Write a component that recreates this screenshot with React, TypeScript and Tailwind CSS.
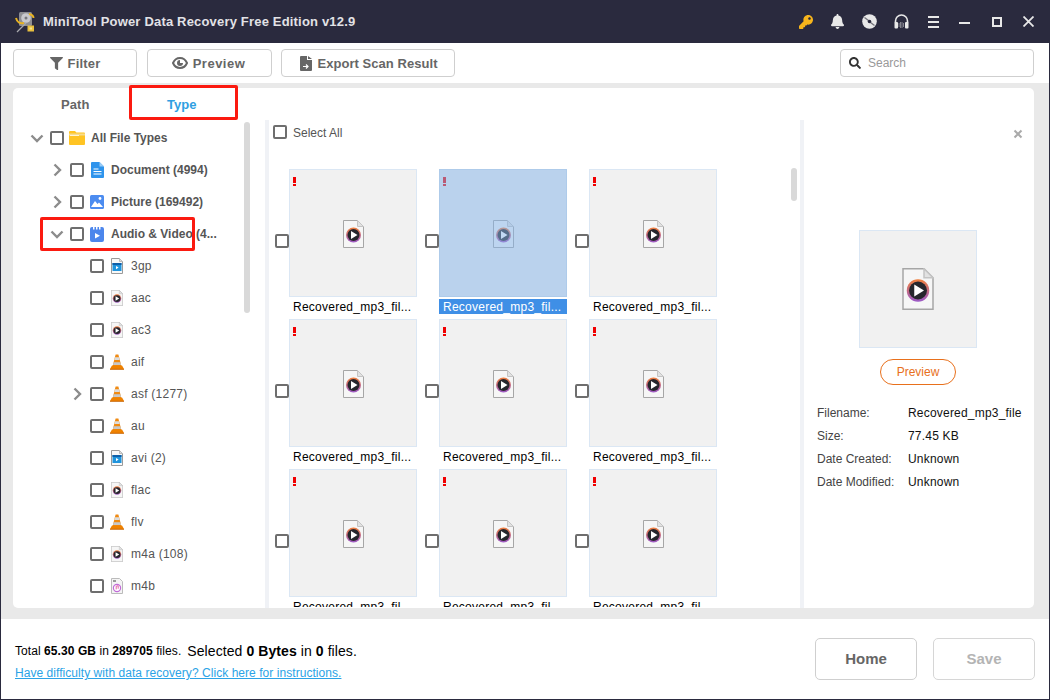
import { FaBell, FaFilter, FaKey, FaSearch } from 'react-icons/fa';

const FONT = "font-['Liberation_Sans',Arial,sans-serif]";

const Check = () => (
  <span className="block w-[14px] h-[14px] shrink-0 rounded-[2px] border-2 border-[#6e6e6e] bg-white" />
);

const Chevron = ({ open }: { open?: boolean }) => (
  <svg width="14" height="14" viewBox="0 0 14 14" fill="none" stroke="#8c8c8c" strokeWidth="2.4">
    {open ? <path d="M1.5 4.5 7 10l5.5-5.5" /> : <path d="M4.5 1.5 10 7l-5.5 5.5" />}
  </svg>
);

const MediaFile = ({ w, h }: { w: number; h: number }) => (
  <svg width={w} height={h} viewBox="0 0 21 28">
    <defs>
      <linearGradient id="ring" x1="0" y1="0" x2="0" y2="1">
        <stop offset="0" stopColor="#f0803c" />
        <stop offset="1" stopColor="#9a58c8" />
      </linearGradient>
    </defs>
    <path d="M.5.5h14l6 6v21H.5z" fill="#f6f6f6" stroke="#a6a6a6" />
    <path d="M14.500.5v6h6z" fill="#e2e2e2" stroke="#c4c4c4" />
    <circle cx="10.500" cy="15" r="7.500" fill="url(#ring)" />
    <circle cx="10.500" cy="15" r="6" fill="#26262c" />
    <path d="M8 11l6.500 4L8 19z" fill="#fff" />
  </svg>
);

const VideoFile = () => (
  <svg width="12" height="16" viewBox="0 0 12 16">
    <path d="M.5.5h8l3 3v12H.5z" fill="#f8f8f8" stroke="#9a9a9a" />
    <path d="M8.500.5v3h3z" fill="#ddd" stroke="#bbb" />
    <rect x="1.500" y="5" width="9" height="8" fill="#2094dc" />
    <rect x="1.500" y="5" width="9" height="2" fill="#0f5fa8" />
    <path d="M5 8l2.600 1.600L5 11.200z" fill="#fff" />
  </svg>
);

const ItunesFile = () => (
  <svg width="12" height="16" viewBox="0 0 12 16">
    <path d="M.5.5h8l3 3v12H.5z" fill="#f4f4f4" stroke="#bbb" />
    <rect x="2" y="2" width="3" height="2" fill="#999" />
    <circle cx="6" cy="10" r="3.600" fill="#fff" stroke="#c06ad8" strokeWidth="1.200" />
    <path d="M5.200 11.400V8.200l2-.5v3" fill="none" stroke="#e0559a" strokeWidth=".9" />
  </svg>
);

const Cone = () => (
  <svg width="14" height="16" viewBox="0 0 14 16">
    <path d="M5.600.5h2.800l3.200 12.500H2.400z" fill="#f08a12" />
    <path d="M5 3.200h4l.7 2.800H4.300z" fill="#dcdcdc" />
    <path d="M3.700 8.200h6.600l.7 2.800H3z" fill="#c8c8c8" />
    <path d="M2 11.500h10l2 3.500H0z" fill="#ef8200" />
    <path d="M0 14.800h14v1H0z" fill="#c96400" />
  </svg>
);

const FolderIcon = () => (
  <svg width="16" height="14" viewBox="0 0 16 14">
    <path d="M0 1a1 1 0 0 1 1-1h5l1.400 1.600H15a1 1 0 0 1 1 1V13a1 1 0 0 1-1 1H1a1 1 0 0 1-1-1z" fill="#ffc423" />
    <path d="M0 2.500h16v2H0z" fill="#f7dc8d" />
    <path d="M1 4h9v.8H1z" fill="#fff" />
  </svg>
);

const DocIcon = () => (
  <svg width="13" height="16" viewBox="0 0 13 16">
    <path d="M1 0h7.500L13 4.500V15a1 1 0 0 1-1 1H1a1 1 0 0 1-1-1V1a1 1 0 0 1 1-1z" fill="#2f94ec" />
    <path d="M8.500 0 13 4.500H8.500z" fill="#9accf6" />
    <path d="M2.500 6.500h5v1h-5zM2.500 9h8v1h-8zM2.500 11.500h8v1h-8z" fill="#fff" />
  </svg>
);

const PictureIcon = () => (
  <svg width="14" height="14" viewBox="0 0 14 14">
    <rect width="14" height="14" rx="1.500" fill="#4c8cf0" />
    <circle cx="10" cy="3.500" r="1.400" fill="#fff" />
    <path d="M1 12l4-6 2.500 3 1.500-1.500 4 4.500z" fill="#fff" />
  </svg>
);

const AudioVideoIcon = () => (
  <svg width="14" height="15" viewBox="0 0 14 15">
    <path d="M2 0h1v2.500h1.500V0h1.500v2.500h1.500V0h1.500v2.500h1.500V0H12a2 2 0 0 1 2 2v11a2 2 0 0 1-2 2H2a2 2 0 0 1-2-2V2a2 2 0 0 1 2-2z" fill="#4c86ec" />
    <path d="M5 6l5 2.800-5 2.800z" fill="#fff" />
  </svg>
);

const DiscIcon = () => (
  <svg width="15" height="15" viewBox="0 0 15 15">
    <circle cx="7.500" cy="7.500" r="7.300" fill="#e8e8e8" />
    <path d="M2.500 3.500l4 3M8.500 8.500l4 3" stroke="#77777f" strokeWidth="1.500" />
    <circle cx="7.500" cy="7.500" r="1.800" fill="#2a2a3e" />
  </svg>
);

const HeadsetIcon = () => (
  <svg width="15" height="15" viewBox="0 0 15 15">
    <path d="M1.500 9V7a6 6 0 0 1 12 0v2" fill="none" stroke="#e8e8e8" strokeWidth="1.600" />
    <rect x=".5" y="8" width="3.500" height="6.500" rx="1" fill="#e8e8e8" />
    <rect x="11" y="8" width="3.500" height="6.500" rx="1" fill="#e8e8e8" />
    <path d="M5 9v4M6.500 8v6M8 8v6M9.500 9v4" stroke="#9a9aa2" strokeWidth=".8" />
  </svg>
);

const AppLogo = () => (
  <svg width="20" height="22" viewBox="0 0 20 22">
    <rect x="4" y="1" width="13" height="14" rx="1.500" fill="#8e8e92" />
    <circle cx="11" cy="7" r="4.800" fill="#c9c9cd" />
    <circle cx="11" cy="7" r="1.500" fill="#77777c" />
    <path d="M1 7c1 4 4 6 8 5" fill="none" stroke="#e9b422" strokeWidth="2" />
    <path d="M14 3c3 .5 4.500 2 4.500 4" fill="none" stroke="#e9b422" strokeWidth="2" />
    <path d="M2 21l9-9" stroke="#a9a9ad" strokeWidth="1.300" />
    <rect x="12.500" y="14.500" width="6.500" height="6" fill="#e8bf3e" />
    <rect x="14.500" y="16.500" width="2.500" height="2" fill="#f6e58f" />
  </svg>
);

const EyeIcon = () => (
  <svg width="16" height="14" viewBox="0 0 16 14" fill="none">
    <path d="M1 7c1.500-3.500 4-5 7-5s5.500 1.500 7 5c-1.500 3.500-4 5-7 5s-5.500-1.500-7-5z" stroke="#666" strokeWidth="2" />
    <path d="M8 4a3 3 0 1 0 3 3H8z" fill="#666" />
  </svg>
);

const ExportIcon = () => (
  <svg width="12" height="15" viewBox="0 0 12 15">
    <path d="M1 0h6v4h5v10a1 1 0 0 1-1 1H1a1 1 0 0 1-1-1V1a1 1 0 0 1 1-1zM8 0l4 3H8z" fill="#666" />
    <path d="M3 10.500h4.500M6 8.500l2 2-2 2" stroke="#fff" strokeWidth="1.200" fill="none" />
  </svg>
);

const treeItems = [
  { label: '3gp', icon: <VideoFile /> },
  { label: 'aac', icon: <MediaFile w={12} h={16} /> },
  { label: 'ac3', icon: <MediaFile w={12} h={16} /> },
  { label: 'aif', icon: <Cone /> },
  { label: 'asf (1277)', icon: <Cone />, collapsed: true },
  { label: 'au', icon: <Cone /> },
  { label: 'avi (2)', icon: <VideoFile /> },
  { label: 'flac', icon: <MediaFile w={12} h={16} /> },
  { label: 'flv', icon: <Cone /> },
  { label: 'm4a (108)', icon: <MediaFile w={12} h={16} /> },
  { label: 'm4b', icon: <ItunesFile /> },
];

const ToolButton = ({ width, icon, label }: { width: string; icon: React.ReactNode; label: string }) => (
  <button
    type="button"
    className={`${width} h-[28px] flex items-center justify-center gap-[5px] rounded-[4px] border border-[#cfcfcf] bg-white text-[13px] font-bold text-[#666]`}
  >
    {icon}
    <span className="pt-[1px]">{label}</span>
  </button>
);

const FileThumb = ({ selected }: { selected?: boolean }) => (
  <div className="flex items-start w-[142px] h-[150px] shrink-0">
    <div className="mt-[65px]">
      <Check />
    </div>
    <div className="w-[128px]">
      <div
        className={`relative h-[128px] border flex items-center justify-center bg-[#f1f1f1] ${
          selected ? 'border-[#aecbea]' : 'border-[#dbe7f4]'
        }`}
      >
        <span className="absolute left-[3px] top-[7px] w-[3px] h-[9px] flex flex-col justify-between">
          <span className="block h-[6px] bg-[#f00000]" />
          <span className="block h-[2px] bg-[#f00000]" />
        </span>
        <span className="mt-[1px]">
          <MediaFile w={21} h={28} />
        </span>
        {selected && <span className="absolute inset-0 bg-[#84b3ea]/50" />}
      </div>
      <div
        className={`mt-[2px] h-[15px] pl-[4px] text-[12px] leading-[17px] tracking-[0.25px] whitespace-nowrap ${
          selected ? 'bg-[#3f8fe6] text-white' : 'text-black'
        }`}
      >
        Recovered_mp3_fil...
      </div>
    </div>
  </div>
);

const DetailRow = ({ name, value }: { name: string; value: string }) => (
  <div className="flex h-[23px] items-center text-[12px] whitespace-nowrap">
    <span className="w-[91px] text-[#444]">{name}</span>
    <span className="text-[#111] tracking-[0.2px]">{value}</span>
  </div>
);

export default function App() {
  return (
    <div className={`${FONT} relative w-[1050px] h-[700px] px-[1px] pb-[1px] bg-[#2a2a3e] overflow-hidden`}>
      <div className="h-full flex flex-col">
        {/* Title bar */}
        <div className="h-[43px] shrink-0 flex items-center -mx-[1px] pl-[15px] pr-[16px] bg-[#2a2a3e]">
          <AppLogo />
          <span className="ml-[8px] text-[13px] tracking-[0.18px] font-bold text-[#e2e2e6] whitespace-nowrap">
            MiniTool Power Data Recovery Free Edition v12.9
          </span>
          <div className="ml-auto flex items-center">
            <FaKey className="w-[14px] h-[14px] text-[#f7b51c]" />
            <FaBell className="ml-[18px] w-[13px] h-[15px] text-[#e8e8e8]" />
            <span className="ml-[18px]"><DiscIcon /></span>
            <span className="ml-[17px]"><HeadsetIcon /></span>
            <span className="ml-[19px] flex flex-col gap-[3px]">
              <span className="block w-[11px] h-[2px] bg-[#e8e8e8]" />
              <span className="block w-[11px] h-[2px] bg-[#e8e8e8]" />
              <span className="block w-[11px] h-[2px] bg-[#e8e8e8]" />
            </span>
            <span className="ml-[20px] block w-[11px] h-[2px] mt-[2px] bg-[#e8e8e8]" />
            <span className="ml-[22px] block w-[10px] h-[10px] border-2 border-[#e8e8e8]" />
            <svg className="ml-[21px]" width="11" height="11" viewBox="0 0 11 11" stroke="#e8e8e8" strokeWidth="1.800">
              <path d="M.5.5l10 10M10.500.5l-10 10" />
            </svg>
          </div>
        </div>

        {/* Toolbar */}
        <div className="h-[40px] shrink-0 flex items-center pl-[12px] pr-[15px] bg-white">
          <ToolButton width="w-[124px] tracking-[0.2px]" icon={<FaFilter className="w-[13px] h-[13px] text-[#666]" />} label="Filter" />
          <div className="w-[10px]" />
          <ToolButton width="w-[125px] tracking-[0.5px] pr-[2px]" icon={<EyeIcon />} label="Preview" />
          <div className="w-[9px]" />
          <ToolButton width="w-[174px] tracking-[0.05px] pl-[2px]" icon={<ExportIcon />} label="Export Scan Result" />
          <div className="ml-auto w-[194px] h-[28px] flex items-center pl-[8px] rounded-[4px] border border-[#cfcfcf] bg-white">
            <FaSearch className="w-[12px] h-[12px] text-[#333]" />
            <span className="ml-[7px] text-[12px] text-[#999]">Search</span>
          </div>
        </div>

        {/* Results area */}
        <div className="h-[536px] shrink-0 bg-[#e9e9e9] pt-[5px] pl-[12px] pr-[15px]">
          <div className="h-[520px] rounded-[5px] bg-white overflow-hidden">
            <div className="h-[32px] pt-[2px] flex items-center text-[13px] font-bold">
              <span className="w-[124px] pl-[48px] text-[#666] tracking-[0.1px]">Path</span>
              <span className="text-[#2f9fe2] ml-[30px]">Type</span>
            </div>
            <div className="flex h-[488px]">
              {/* Tree */}
              <div className="relative w-[252px] shrink-0 overflow-hidden text-[12px]">
                <div className="h-[34px] flex items-center pl-[14px] pt-[2px]">
                  <span className="w-[20px] flex justify-center"><Chevron open /></span>
                  <span className="ml-[3px]"><Check /></span>
                  <span className="ml-[5px] w-[16px] flex justify-center"><FolderIcon /></span>
                  <span className="ml-[6px] font-bold text-[#555]">All File Types</span>
                </div>
                {[
                  { label: 'Document (4994)', icon: <DocIcon /> },
                  { label: 'Picture (169492)', icon: <PictureIcon /> },
                  { label: 'Audio & Video (4...', icon: <AudioVideoIcon />, open: true },
                ].map((row) => (
                  <div key={row.label} className="h-[32px] flex items-center pl-[34px]">
                    <span className="w-[20px] flex justify-center"><Chevron open={row.open} /></span>
                    <span className="ml-[3px]"><Check /></span>
                    <span className="ml-[5px] w-[16px] flex justify-center">{row.icon}</span>
                    <span className="ml-[6px] font-bold text-[#555] whitespace-nowrap">{row.label}</span>
                  </div>
                ))}
                {treeItems.map((item) => (
                  <div key={item.label} className="h-[32px] flex items-center pl-[54px]">
                    <span className="w-[20px] flex justify-center">{item.collapsed && <Chevron />}</span>
                    <span className="ml-[3px]"><Check /></span>
                    <span className="ml-[5px] w-[16px] flex justify-center">{item.icon}</span>
                    <span className="ml-[6px] text-[#555] tracking-[0.25px] whitespace-nowrap">{item.label}</span>
                  </div>
                ))}
                <span className="absolute left-[231px] top-[2px] w-[6px] h-[191px] rounded-[3px] bg-[#d9d9d9]" />
              </div>
              <div className="w-[4px] shrink-0 bg-[#f0f2f6]" />

              {/* File grid */}
              <div className="relative w-[531px] h-[487px] shrink-0 overflow-hidden pl-[6px]">
                <div className="h-[49px] -ml-[2px] pt-[5px] flex items-start">
                  <Check />
                  <span className="ml-[6px] text-[12px] leading-[16px] text-[#555]">Select All</span>
                </div>
                <div className="flex flex-wrap gap-x-[8px]">
                  {Array.from({ length: 9 }).map((_, i) => (
                    <FileThumb key={i} selected={i === 1} />
                  ))}
                </div>
                <span className="absolute left-[522px] top-[48px] w-[6px] h-[33px] rounded-[3px] bg-[#d9d9d9]" />
              </div>
              <div className="w-[4px] shrink-0 bg-[#f0f2f6]" />

              {/* Preview pane */}
              <div className="w-[230px] shrink-0">
                <div className="h-[110px] flex justify-end pt-[9px] pr-[11px]">
                  <svg width="10" height="10" viewBox="0 0 10 10" stroke="#aaa" strokeWidth="2">
                    <path d="M1.500 1.500l7 7M8.500 1.500l-7 7" />
                  </svg>
                </div>
                <div className="ml-[55px] w-[118px] h-[118px] border border-[#dbe7f4] bg-[#f1f1f1] flex items-center justify-center">
                  <MediaFile w={32} h={42} />
                </div>
                <button
                  type="button"
                  className="block ml-[76px] mt-[11px] w-[76px] h-[26px] rounded-[13px] border border-[#e8701c] bg-white text-[12px] text-[#e8701c]"
                >
                  Preview
                </button>
                <div className="mt-[16px] pl-[13px]">
                  <DetailRow name="Filename:" value="Recovered_mp3_file" />
                  <DetailRow name="Size:" value="77.45 KB" />
                  <DetailRow name="Date Created:" value="Unknown" />
                  <DetailRow name="Date Modified:" value="Unknown" />
                </div>
              </div>
            </div>
          </div>
        </div>

        {/* Footer */}
        <div className="flex-1 flex justify-between bg-white pl-[14px] pr-[14px]">
          <div className="pt-[23px]">
            <div className="h-[18px] flex items-center text-[12px] text-black whitespace-nowrap">
              <span className="tracking-[0.07px]">
                Total <b>65.30 GB</b> in <b>289705</b> files.
              </span>
              <span className="ml-[6px] text-[14px] tracking-[0.08px]">
                Selected <b>0 Bytes</b> in <b>0</b> files.
              </span>
            </div>
            <a className="block mt-[6px] text-[12px] leading-[14px] tracking-[0.05px] text-[#2ba3e6] underline whitespace-nowrap">
              Have difficulty with data recovery? Click here for instructions.
            </a>
          </div>
          <div className="pt-[19px] flex items-start gap-[16px]">
            <button
              type="button"
              className="w-[102px] h-[42px] rounded-[5px] border border-[#cfcfcf] bg-white text-[15px] font-bold text-[#666]"
            >
              Home
            </button>
            <button
              type="button"
              className="w-[102px] h-[42px] rounded-[5px] border border-[#d6d6d6] bg-white text-[15px] font-bold text-[#b4b4b4]"
            >
              Save
            </button>
          </div>
        </div>
      </div>

      {/* Red annotation boxes drawn over the screenshot */}
      <span className="absolute left-[129px] top-[85px] w-[109px] h-[35px] rounded-[2px] border-[3px] border-[#fb1a10]" />
      <span className="absolute left-[40px] top-[217px] w-[155px] h-[34px] rounded-[2px] border-[3px] border-[#fb1a10]" />
    </div>
  );
}
